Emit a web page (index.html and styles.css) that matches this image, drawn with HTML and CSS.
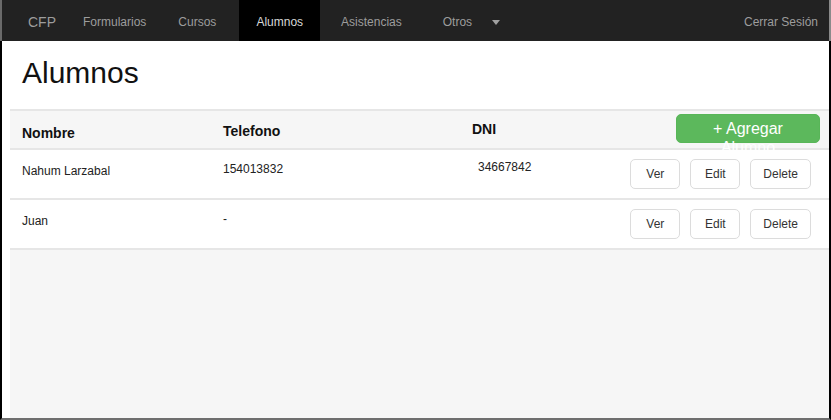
FILE: index.html
```html
<!DOCTYPE html>
<html lang="es">
<head>
<meta charset="utf-8">
<title>Alumnos</title>
<link rel="stylesheet" href="styles.css">
</head>
<body>
<nav class="navbar">
  <a class="brand" href="#">CFP</a>
  <ul class="nav">
    <li><a class="nav-link link-form" href="#">Formularios</a></li>
    <li><a class="nav-link link-cursos" href="#">Cursos</a></li>
    <li><a class="nav-link link-alumnos active" href="#">Alumnos</a></li>
    <li><a class="nav-link link-asist" href="#">Asistencias</a></li>
    <li><a class="nav-link link-otros" href="#">Otros <span class="caret"></span></a></li>
  </ul>
  <a class="logout" href="#">Cerrar Sesión</a>
</nav>
<main class="main">
  <h1 class="page-title">Alumnos</h1>
  <section class="panel">
    <table class="table">
      <thead>
        <tr class="head-row">
          <th class="th-name">Nombre</th>
          <th class="th-phone">Telefono</th>
          <th class="th-dni">DNI</th>
          <th class="th-add"><button class="btn-add">+ Agregar Alumno</button></th>
        </tr>
      </thead>
      <tbody>
        <tr class="row">
          <td class="td-name">Nahum Larzabal</td>
          <td class="td-phone">154013832</td>
          <td class="td-dni">34667842</td>
          <td class="td-actions">
            <div class="actions">
              <button class="btn">Ver</button>
              <button class="btn">Edit</button>
              <button class="btn">Delete</button>
            </div>
          </td>
        </tr>
        <tr class="row">
          <td class="td-name">Juan</td>
          <td class="td-phone">-</td>
          <td class="td-dni"></td>
          <td class="td-actions">
            <div class="actions">
              <button class="btn">Ver</button>
              <button class="btn">Edit</button>
              <button class="btn">Delete</button>
            </div>
          </td>
        </tr>
      </tbody>
    </table>
  </section>
</main>
</body>
</html>
```

FILE: styles.css
```css
* { box-sizing: border-box; }

html, body {
  margin: 0;
  padding: 0;
  height: 420px;
  overflow: hidden;
}

body {
  display: flex;
  flex-direction: column;
  font-family: "Liberation Sans", Arial, sans-serif;
  background: #fff;
  color: #333;
}

.navbar {
  flex: 0 0 41px;
  height: 41px;
  display: flex;
  align-items: stretch;
  background: #222;
  border-left: 2px solid #6a6a6a;
  border-right: 2px solid #8a8a8a;
}

.brand {
  display: flex;
  align-items: center;
  padding: 2px 10px 0 26px;
  font-size: 14px;
  color: #9d9d9d;
  text-decoration: none;
}

.nav {
  display: flex;
  list-style: none;
  margin: 0;
  padding: 0;
}

.nav li { display: flex; }

.nav-link {
  display: flex;
  align-items: center;
  padding: 2px 17px 0;
  font-size: 12px;
  color: #9d9d9d;
  text-decoration: none;
}

.link-cursos { margin-left: -2px; }
.link-alumnos { margin-left: 6px; }
.link-asist { margin-left: 4px; }
.link-otros { margin-left: 7px; }

.nav-link.active {
  background: #000;
  color: #d8d8d8;
}

.caret {
  display: inline-block;
  width: 0;
  height: 0;
  margin-left: 20px;
  margin-top: 1px;
  border-left: 4.5px solid transparent;
  border-right: 4.5px solid transparent;
  border-top: 5px solid #a0a0a0;
}

.logout {
  margin-left: auto;
  display: flex;
  align-items: center;
  padding: 2px 11px 0 0;
  font-size: 12px;
  color: #9d9d9d;
  text-decoration: none;
}

.main {
  flex: 1;
  display: flex;
  flex-direction: column;
  border-left: 2px solid #000;
  border-right: 2px solid #000;
  border-bottom: 2px solid #6e6e6e;
  min-height: 0;
}

.page-title {
  margin: 15px 0 20px 20px;
  font-size: 30px;
  line-height: 33px;
  font-weight: normal;
  color: #111;
}

.panel {
  flex: 1;
  margin-left: 8px;
  background: #f6f6f6;
}

.table {
  width: 100%;
  border-collapse: collapse;
  table-layout: fixed;
}

.table tr {
  border-top: 2px solid #e6e6e6;
}

.table tbody tr:last-child {
  border-bottom: 2px solid #e6e6e6;
}

.head-row { background: #f6f6f6; }
.row { background: #fff; }

.table th {
  text-align: left;
  vertical-align: top;
  font-size: 14px;
  line-height: 20px;
  font-weight: bold;
  color: #111;
  padding: 0 0 0 12px;
}

.th-name { width: 201px; padding-top: 12px !important; }
.th-phone { width: 249px; padding-top: 10px !important; }
.th-dni { width: 160px; padding-top: 8px !important; }
.table .th-add {
  padding: 3px 9px 5px 0;
  text-align: right;
}

.btn-add {
  width: 144px;
  height: 29px;
  padding: 0 12px;
  border: 1px solid #58b658;
  border-radius: 5px;
  background: #5cb85c;
  color: #fff;
  font-family: "Liberation Sans", Arial, sans-serif;
  font-size: 16px;
  line-height: 19px;
  display: flex;
  align-items: flex-start;
  justify-content: center;
  padding-top: 4px;
  margin-left: auto;
  overflow: visible;
}

.table td {
  vertical-align: top;
  font-size: 12px;
  line-height: 20px;
  color: #222;
  padding: 0 0 0 12px;
  height: 50px;
}

.table .td-name { padding-top: 11px; }
.table .td-phone { padding-top: 9px; }
.table .td-dni { padding-top: 7px; padding-left: 18px; }
.table .td-actions { padding: 9px 18px 0 0; }

.actions {
  display: flex;
  justify-content: flex-end;
  gap: 10px;
}

.btn {
  min-width: 50px;
  height: 30px;
  padding: 0 12px;
  border: 1px solid #dcdcdc;
  border-radius: 5px;
  background: #fff;
  color: #333;
  font-family: "Liberation Sans", Arial, sans-serif;
  font-size: 12px;
  line-height: 28px;
}
```
